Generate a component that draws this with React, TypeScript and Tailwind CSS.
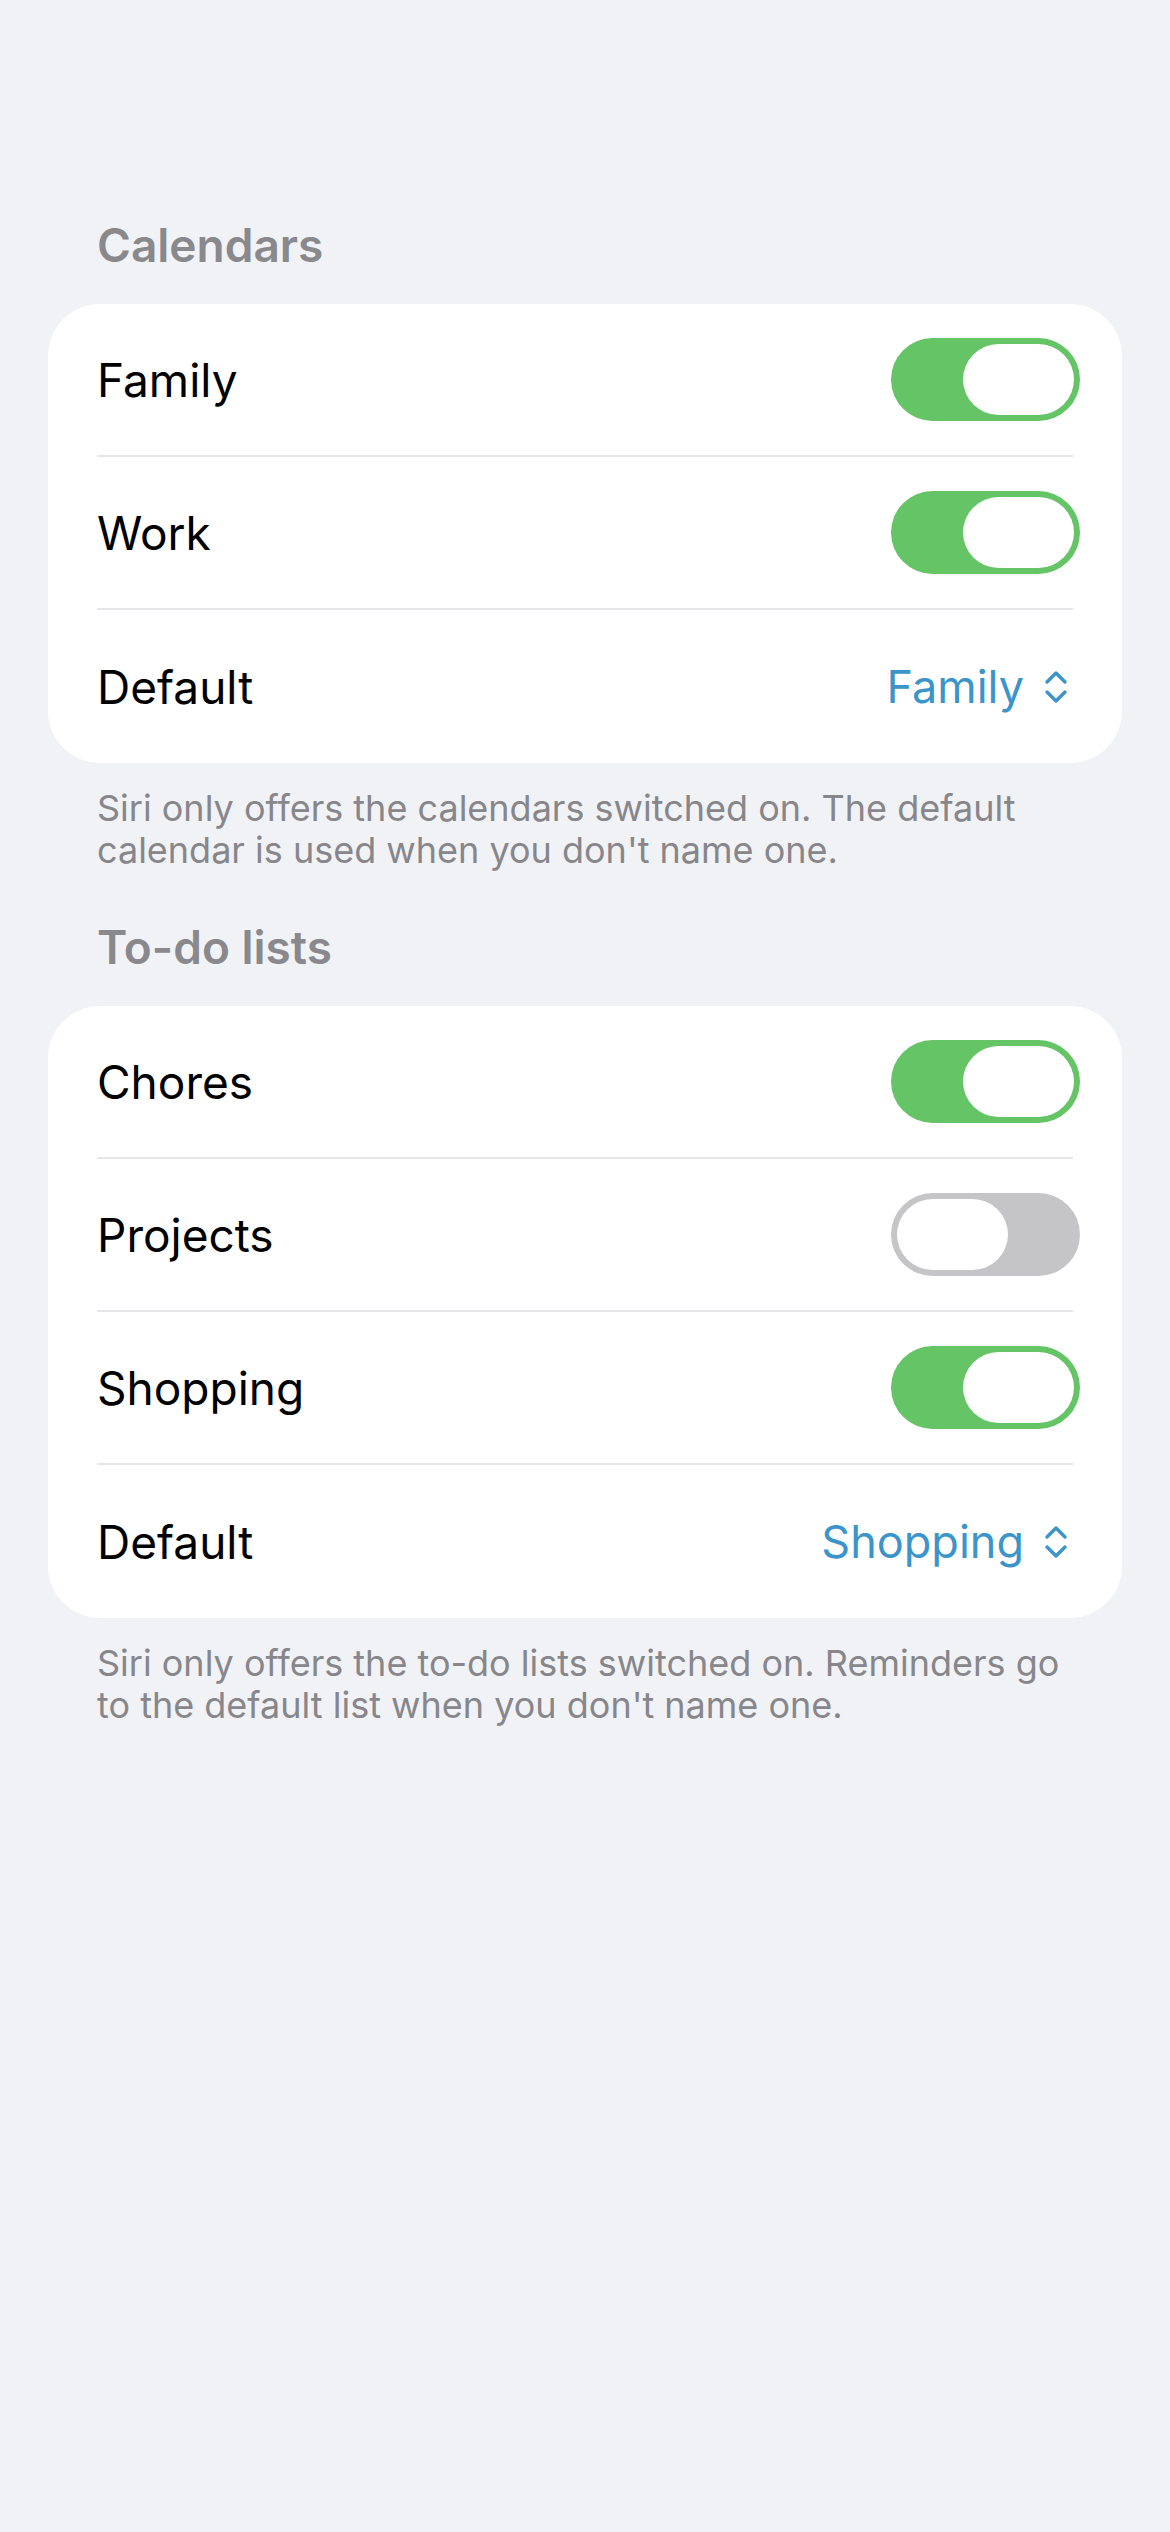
import type { ReactNode } from 'react';

type Row =
  | { kind: 'toggle'; label: string; on: boolean }
  | { kind: 'picker'; label: string; value: string };

interface Section {
  title: string;
  rows: Row[];
  footer: ReactNode;
}

const sections: Section[] = [
  {
    title: 'Calendars',
    rows: [
      { kind: 'toggle', label: 'Family', on: true },
      { kind: 'toggle', label: 'Work', on: true },
      { kind: 'picker', label: 'Default', value: 'Family' },
    ],
    footer: (
      <>
        Siri only offers the calendars switched on. The default
        <br />
        calendar is used when you don't name one.
      </>
    ),
  },
  {
    title: 'To-do lists',
    rows: [
      { kind: 'toggle', label: 'Chores', on: true },
      { kind: 'toggle', label: 'Projects', on: false },
      { kind: 'toggle', label: 'Shopping', on: true },
      { kind: 'picker', label: 'Default', value: 'Shopping' },
    ],
    footer: (
      <>
        Siri only offers the to-do lists switched on. Reminders go
        <br />
        to the default list when you don't name one.
      </>
    ),
  },
];

function Toggle({ on }: { on: boolean }) {
  return (
    <div
      className={
        on
          ? 'flex h-[83px] w-[189px] items-center justify-end rounded-full bg-[#65c466] p-[6px]'
          : 'flex h-[83px] w-[189px] items-center justify-start rounded-full bg-[#c5c5c7] p-[6px]'
      }
    >
      <div className="h-[71px] w-[111px] rounded-full bg-white" />
    </div>
  );
}

function UpDown() {
  return (
    <svg width="24" height="36" viewBox="0 0 24 36" fill="none" stroke="#3b95ca" strokeWidth="3.4" strokeLinecap="round" strokeLinejoin="round">
      <path d="M3 13 L12 4 L21 13" />
      <path d="M3 23 L12 32 L21 23" />
    </svg>
  );
}

function SettingsRow({ row, last }: { row: Row; last: boolean }) {
  return (
    <>
      <div className={`flex items-center justify-between pl-[49px] ${last ? 'h-[153px]' : 'h-[151px]'} ${row.kind === 'toggle' ? 'pr-[42px]' : 'pr-[54px]'}`}>
        <span className="text-[46px] text-black">{row.label}</span>
        {row.kind === 'toggle' ? (
          <Toggle on={row.on} />
        ) : (
          <div className="flex items-center gap-[20px]">
            <span className="text-[45px] text-[#3b95ca]">{row.value}</span>
            <UpDown />
          </div>
        )}
      </div>
      {!last && <div className="mx-[49px] h-[2px] bg-[#e6e6ea]" />}
    </>
  );
}

export default function App() {
  return (
    <div className="min-h-[2532px] w-full bg-[#f1f2f6] px-[48px] pt-[217px] font-['Inter',sans-serif] leading-[56px]">
      {sections.map((section, i) => (
        <div key={section.title} className={i > 0 ? 'mt-[48px]' : ''}>
          <h2 className="pl-[49px] text-[46px] font-semibold text-[#88888d]">{section.title}</h2>
          <div className="mt-[31px] overflow-hidden rounded-[52px] bg-white">
            {section.rows.map((row, idx) => (
              <SettingsRow key={idx} row={row} last={idx === section.rows.length - 1} />
            ))}
          </div>
          <p className="mt-[24px] pl-[49px] text-[36px] leading-[42px] text-[#86868b]">{section.footer}</p>
        </div>
      ))}
    </div>
  );
}
